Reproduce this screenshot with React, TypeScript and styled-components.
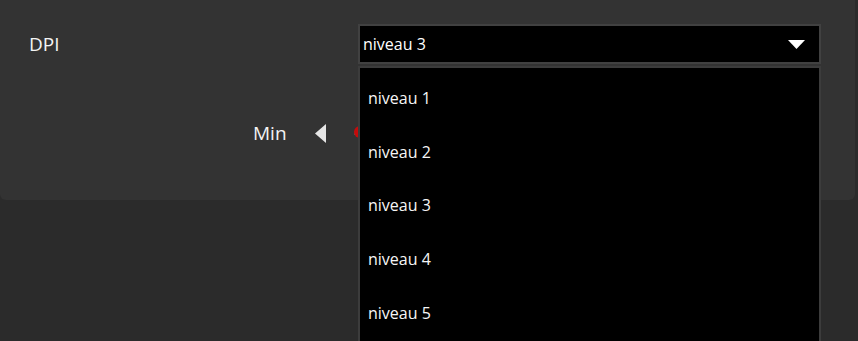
import styled, { createGlobalStyle } from 'styled-components';

const levels = ['niveau 1', 'niveau 2', 'niveau 3', 'niveau 4', 'niveau 5'];

const GlobalStyle = createGlobalStyle`
  html, body {
    margin: 0;
    padding: 0;
    background: #2b2b2b;
    font-family: 'Open Sans', 'Noto Sans', 'Liberation Sans', sans-serif;
    color: #f4f4f4;
  }
  html {
    overflow: hidden;
  }
`;

export default function App() {
  return (
    <Page>
      <GlobalStyle />
      <Panel>
        <SettingRow>
          <Label>DPI</Label>
          <SelectBox>
            <SelectButton>
              <span>niveau 3</span>
              <svg width="17" height="9" viewBox="0 0 17 9">
                <polygon points="0,0 17,0 8.5,9" fill="#ffffff" />
              </svg>
            </SelectButton>
            <OptionList>
              {levels.map((l) => (
                <Option key={l}>{l}</Option>
              ))}
            </OptionList>
          </SelectBox>
        </SettingRow>
        <RangeRow>
          <RangeLabel>Min</RangeLabel>
          <StepButton>
            <svg width="11" height="19" viewBox="0 0 11 19">
              <polygon points="11,0 11,19 0,9.5" fill="#e6e6e6" />
            </svg>
          </StepButton>
          <Track>
            <Thumb />
          </Track>
        </RangeRow>
      </Panel>
    </Page>
  );
}

const Page = styled.div`
  height: 100vh;
  background: #2b2b2b;
`;

const Panel = styled.div`
  position: relative;
  width: 855px;
  height: 200px;
  box-sizing: border-box;
  background: #333333;
  border-radius: 0 0 6px 6px;
  padding-top: 24px;
`;

const SettingRow = styled.div`
  display: flex;
  align-items: center;
  padding: 0 34px 0 29px;
`;

const Label = styled.div`
  flex: 1;
  font-size: 19px;
  line-height: 24px;
`;

const SelectBox = styled.div`
  position: relative;
  width: 463px;
  z-index: 5;
`;

const SelectButton = styled.div`
  height: 40px;
  box-sizing: border-box;
  border: 2px solid #414141;
  background: #000000;
  display: flex;
  align-items: center;
  justify-content: space-between;
  padding: 0 14px 0 3px;
  font-size: 16px;
  color: #ffffff;

  svg {
    display: block;
  }
`;

const OptionList = styled.div`
  position: absolute;
  top: 42px;
  left: 0;
  right: 0;
  height: 277px;
  box-sizing: border-box;
  border: 2px solid #3c3c3c;
  background: #000000;
  padding-top: 3px;
`;

const Option = styled.div`
  height: 53.7px;
  display: flex;
  align-items: center;
  padding-left: 8px;
  font-size: 16px;
  color: #f6f6f6;
`;

const RangeRow = styled.div`
  display: flex;
  align-items: center;
  padding-left: 253px;
  margin-top: 57px;
`;

const RangeLabel = styled.div`
  font-size: 19px;
  line-height: 24px;
  width: 62px;
`;

const StepButton = styled.div`
  width: 39px;
  display: flex;

  svg {
    display: block;
  }
`;

const Track = styled.div`
  position: relative;
  width: 150px;
  height: 4px;
  background: #555555;
`;

const Thumb = styled.div`
  position: absolute;
  left: 0;
  top: -5px;
  width: 12px;
  height: 12px;
  border-radius: 50%;
  background: #c40c0c;
`;
